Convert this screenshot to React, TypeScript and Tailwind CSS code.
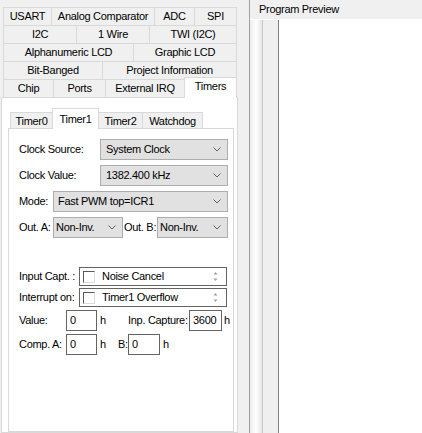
import React from 'react'

const rows: [string, string][][] = [
  [['USART', 'w-[48px]'], ['Analog Comparator', 'w-[103px]'], ['ADC', 'w-[40px]'], ['SPI', 'w-[43px]']],
  [['I2C', 'w-[73px]'], ['1 Wire', 'w-[73px]'], ['TWI (I2C)', 'w-[88px]']],
  [['Alphanumeric LCD', 'w-[130px]'], ['Graphic LCD', 'w-[104px]']],
  [['Bit-Banged', 'w-[99px]'], ['Project Information', 'w-[135px]']],
]

function Tab({ label, w, last }: { label: string; w: string; last?: boolean }) {
  return (
    <div className={`${w} h-[18px] flex items-center justify-center border-t border-l border-[#d9d9d9] bg-[#f0f0f0] ${last ? 'border-r' : ''}`}>
      {label}
    </div>
  )
}

function Chevron() {
  return (
    <svg width="8" height="5" viewBox="0 0 8 5" className="shrink-0">
      <path d="M0.5 0.5 L4 4 L7.5 0.5" fill="none" stroke="#606060" strokeWidth="1" />
    </svg>
  )
}

function Combo({ value, w, pl = 'pl-[4px]' }: { value: string; w: string; pl?: string }) {
  return (
    <div className={`${w} h-[21px] shrink-0 flex items-center justify-between ${pl} pr-[6px] bg-[#e1e1e1] border border-[#adadad]`}>
      <span>{value}</span>
      <Chevron />
    </div>
  )
}

function CheckCombo({ value }: { value: string }) {
  return (
    <div className="w-[148px] h-[19px] shrink-0 flex items-center bg-white border border-[#646464] pl-[3px] pr-[8px]">
      <div className="w-[12px] h-[12px] border-t border-l border-[#5a5a5a] border-r border-b border-r-[#dcdcdc] border-b-[#dcdcdc] bg-white shrink-0" />
      <span className="ml-[7px] flex-1">{value}</span>
      <svg width="5" height="11" viewBox="0 0 5 11" className="shrink-0">
        <path d="M2.5 1 L4.5 3.5 L0.5 3.5 Z" fill="#a0a0a0" />
        <path d="M0.5 7.5 L4.5 7.5 L2.5 10 Z" fill="#a0a0a0" />
      </svg>
    </div>
  )
}

function TextBox({ value, w }: { value: string; w: string }) {
  return (
    <div className={`${w} h-[21px] shrink-0 flex items-center pl-[3px] bg-white border border-[#646464]`}>{value}</div>
  )
}

export default function App() {
  return (
    <div className="w-[422px] h-[433px] flex bg-[#f0f0f0] text-[11px] tracking-[-0.3px] whitespace-nowrap text-black overflow-hidden font-['Liberation_Sans',Arial,sans-serif]">
      {/* left: settings tabs */}
      <div className="w-[238px] h-full flex flex-col pt-[7px] pl-px">
        <div className="ml-[2px] w-[234px]">
          {rows.map((row, i) => (
            <div key={i} className="flex">
              {row.map(([label, w], j) => (
                <Tab key={label} label={label} w={w} last={j === row.length - 1} />
              ))}
            </div>
          ))}
          <div className="flex items-end">
            <Tab label="Chip" w="w-[50px]" />
            <Tab label="Ports" w="w-[52px]" />
            <Tab label="External IRQ" w="w-[79px]" />
            <div className="w-[53px] h-[21px] -mt-[2px] -mb-px relative z-10 flex items-center justify-center pb-[3px] bg-white border-t border-l border-r border-[#d9d9d9]">
              Timers
            </div>
          </div>
        </div>

        <div className="w-[237px] flex-1 flex flex-col bg-white border border-[#d9d9d9] pt-[10px] pl-[6px]">
          <div className="flex items-end ml-[2px]">
            <div className="w-[42px] h-[16px] flex items-center justify-center pt-px border-t border-l border-[#d9d9d9] bg-[#f0f0f0]">Timer0</div>
            <div className="w-[47px] h-[21px] -mb-px relative z-10 flex items-start justify-center pt-[2px] bg-white border-t border-l border-r border-[#d9d9d9]">Timer1</div>
            <div className="w-[43px] h-[16px] flex items-center justify-center pt-px border-t border-[#d9d9d9] bg-[#f0f0f0]">Timer2</div>
            <div className="w-[61px] h-[16px] flex items-center justify-center pt-px border-t border-l border-r border-[#d9d9d9] bg-[#f0f0f0]">Watchdog</div>
          </div>

          <div className="w-[226px] flex-1 flex flex-col bg-white border border-[#d9d9d9] pt-[10px] pl-[10px]">
            <div className="flex items-center h-[21px]">
              <span className="w-[81px] shrink-0">Clock Source:</span>
              <Combo value="System Clock" w="w-[128px]" pl="pl-[5px]" />
            </div>
            <div className="flex items-center h-[21px] mt-[5px]">
              <span className="w-[81px] shrink-0">Clock Value:</span>
              <Combo value="1382.400 kHz" w="w-[128px]" pl="pl-[5px]" />
            </div>
            <div className="flex items-center h-[21px] mt-[5px]">
              <span className="w-[34px] shrink-0">Mode:</span>
              <Combo value="Fast PWM top=ICR1" w="w-[175px]" />
            </div>
            <div className="flex items-center h-[21px] mt-[5px]">
              <span className="w-[34px] shrink-0">Out. A:</span>
              <Combo value="Non-Inv." w="w-[70px]" pl="pl-[2px]" />
              <span className="w-[34px] shrink-0 pl-px">Out. B:</span>
              <Combo value="Non-Inv." w="w-[71px]" pl="pl-[2px]" />
            </div>

            <div className="flex items-center h-[19px] mt-[29px]">
              <span className="w-[60px] shrink-0">Input Capt. :</span>
              <CheckCombo value="Noise Cancel" />
            </div>
            <div className="flex items-center h-[19px] mt-[2px]">
              <span className="w-[60px] shrink-0">Interrupt on:</span>
              <CheckCombo value="Timer1 Overflow" />
            </div>
            <div className="flex items-center h-[21px] mt-[3px]">
              <span className="w-[47px] shrink-0">Value:</span>
              <TextBox value="0" w="w-[31px]" />
              <span className="w-[31px] shrink-0 pl-[3px]">h</span>
              <span className="w-[61px] shrink-0">Inp. Capture:</span>
              <TextBox value="3600" w="w-[33px]" />
              <span className="pl-[2px]">h</span>
            </div>
            <div className="flex items-center h-[21px] mt-[3px]">
              <span className="w-[47px] shrink-0">Comp. A:</span>
              <TextBox value="0" w="w-[31px]" />
              <span className="w-[21px] shrink-0 pl-[3px]">h</span>
              <span className="w-[10px] shrink-0">B:</span>
              <TextBox value="0" w="w-[32px]" />
              <span className="pl-[3px]">h</span>
            </div>
          </div>
        </div>
      </div>

      {/* splitter */}
      <div className="w-[11px] h-full" />

      {/* right: program preview */}
      <div className="flex-1 h-full flex flex-col border-l border-[#a0a0a0]">
        <div className="h-[19px] flex items-center pl-[9px] bg-[#f0f0f0]">Program Preview</div>
        <div className="flex-1 flex bg-white pt-px">
          <div className="w-[12px] bg-gradient-to-r from-[#ececec] via-white to-[#e6e6e6]" />
          <div className="w-[17px] bg-[#efefef] border-l border-[#c8c8c8] border-r border-r-[#808080]" />
          <div className="flex-1 bg-white" />
        </div>
      </div>
    </div>
  )
}
